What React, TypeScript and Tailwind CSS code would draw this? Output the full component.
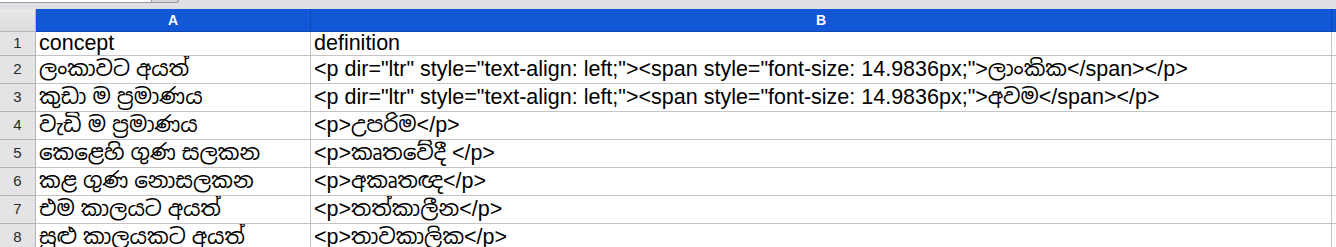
const rows: [string, string][] = [
  ['concept', 'definition'],
  [
    'ලංකාවට අයත්',
    '<p dir="ltr" style="text-align: left;"><span style="font-size: 14.9836px;">ලාංකික</span></p>',
  ],
  [
    'කුඩා ම ප්‍රමාණය',
    '<p dir="ltr" style="text-align: left;"><span style="font-size: 14.9836px;">අවම</span></p>',
  ],
  ['වැඩි ම ප්‍රමාණය', '<p>උපරිම</p>'],
  ['කෙළෙහි ගුණ සලකන', '<p>කෘතවේදී </p>'],
  ['කළ ගුණ නොසලකන', '<p>අකෘතඥ</p>'],
  ['එම කාලයට අයත්', '<p>තත්කාලීන</p>'],
  ['සුළු කාලයකට අයත්', '<p>තාවකාලික</p>'],
]

const cellFont = {
  fontFamily: '"Liberation Sans", "Noto Sans Sinhala", "Noto Sans", sans-serif',
}

export default function App() {
  return (
    <div className="w-[1336px] h-[247px] overflow-hidden bg-white" style={cellFont}>
      {/* toolbar remnant */}
      <div className="h-[9px] bg-[#dfe0e3] flex items-start">
        <div className="w-[152px] h-[3px] bg-white border-b border-r border-[#9a9a9a]" />
        <div className="w-[27px] h-[3px] bg-[#d6d7db] border-b border-r border-[#9a9a9a] rounded-br-[3px]" />
      </div>

      {/* column headers */}
      <div className="grid grid-cols-[36px_275px_1021px_1fr] h-[23px]">
        <div className="bg-gradient-to-b from-[#e9e9ea] to-[#dcdcde] border-r border-b border-[#b4b4b4]" />
        <div className="bg-[#1157d6] border-r border-b border-[#0d47b3] flex items-center justify-center text-white font-bold text-[14px]">
          A
        </div>
        <div className="bg-[#1157d6] border-r border-b border-[#0d47b3] flex items-center justify-center text-white font-bold text-[14px]">
          B
        </div>
        <div className="bg-[#1157d6] border-b border-[#0d47b3]" />
      </div>

      {/* data rows */}
      {rows.map(([a, b], i) => {
        const first = i === 0
        const cell = `border-r border-b border-[#c4c4c4] flex items-end pl-[3px] overflow-hidden whitespace-nowrap text-[21.5px] text-black ${
          first ? 'leading-[22px] pb-[1px]' : 'leading-[26px] pb-[1px]'
        }`
        return (
          <div
            key={i}
            className={`grid grid-cols-[36px_275px_1021px_1fr] ${first ? 'h-[24px]' : 'h-[28px]'}`}
          >
            <div className="bg-[#e4e4e6] border-r border-b border-[#b4b4b4] flex items-center justify-center text-[15px] text-[#2a2a2a]">
              {i + 1}
            </div>
            <div className={cell}>{a}</div>
            <div className={cell}>{b}</div>
            <div className="border-b border-[#c4c4c4]" />
          </div>
        )
      })}
    </div>
  )
}
